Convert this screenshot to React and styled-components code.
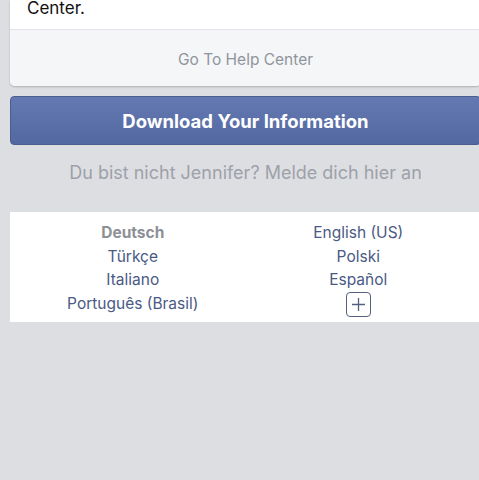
import React from "react";
import styled, { createGlobalStyle } from "styled-components";

const Global = createGlobalStyle`
  html, body { margin: 0; padding: 0; background: #dddee2; overflow: hidden; }
  body { font-family: Inter, "Noto Sans", sans-serif; -webkit-font-smoothing: antialiased; }
  * { box-sizing: border-box; }
`;

const Page = styled.div`
  width: 471px;
  padding-left: 10px;
  box-sizing: content-box;
  height: 480px;
  display: flex;
  flex-direction: column;
`;

const Card = styled.div`
  background: #ffffff;
  border-radius: 0 0 5px 5px;
  box-shadow: 0 1px 2px rgba(0, 0, 0, 0.22);
  overflow: hidden;
`;

const CardBody = styled.div`
  margin-top: -2px;
  height: 32px;
  padding: 0 17px;
  font-size: 17px;
  line-height: 20px;
  color: #111;
  border-bottom: 1px solid #e4e5e8;
`;

const CardFooter = styled.div`
  height: 56px;
  padding-top: 3px;
  background: #f5f6f8;
  display: flex;
  align-items: center;
  justify-content: center;
  font-size: 15.5px;
  color: #90949c;
`;

const PrimaryButton = styled.div`
  margin-top: 10px;
  height: 49px;
  border: 1px solid #4b5d8f;
  border-radius: 4px;
  background: linear-gradient(#6479b2, #5468a0);
  display: flex;
  align-items: center;
  justify-content: center;
  color: #ffffff;
  font-weight: 700;
  font-size: 18.5px;
`;

const SwitchText = styled.div`
  margin-top: 16px;
  text-align: center;
  font-size: 18px;
  line-height: 24px;
  color: #9da1a9;
`;

const LangBox = styled.div`
  margin-top: 27px;
  background: #ffffff;
  padding: 9px 10px 7px;
  display: grid;
  grid-template-columns: 1fr 1fr;
  grid-auto-rows: 23.5px;
`;

const Lang = styled.div`
  text-align: center;
  font-size: 15.5px;
  line-height: 23.5px;
  color: ${(p) => (p.$active ? "#8d9096" : "#4a5985")};
  font-weight: ${(p) => (p.$active ? 700 : 400)};
`;

const MoreCell = styled.div`
  display: flex;
  justify-content: center;
  align-items: flex-end;
`;

const MoreBox = styled.div`
  width: 25px;
  height: 25px;
  border: 1.3px solid #55607e;
  border-radius: 4px;
  display: flex;
  align-items: center;
  justify-content: center;
  margin-bottom: -2px;
`;

const langs = [
  ["Deutsch", true],
  ["English (US)"],
  ["Türkçe"],
  ["Polski"],
  ["Italiano"],
  ["Español"],
  ["Português (Brasil)"],
];

export default function App() {
  return (
    <>
      <Global />
      <Page>
        <Card>
          <CardBody>Center.</CardBody>
          <CardFooter>Go To Help Center</CardFooter>
        </Card>
        <PrimaryButton>Download Your Information</PrimaryButton>
        <SwitchText>Du bist nicht Jennifer? Melde dich hier an</SwitchText>
        <LangBox>
          {langs.map(([name, active]) => (
            <Lang key={name} $active={active}>
              {name}
            </Lang>
          ))}
          <MoreCell>
            <MoreBox>
              <svg width="15" height="15" viewBox="0 0 15 15">
                <path d="M7.5 1v13M1 7.5h13" stroke="#55607e" strokeWidth="1.3" fill="none" />
              </svg>
            </MoreBox>
          </MoreCell>
        </LangBox>
      </Page>
    </>
  );
}
